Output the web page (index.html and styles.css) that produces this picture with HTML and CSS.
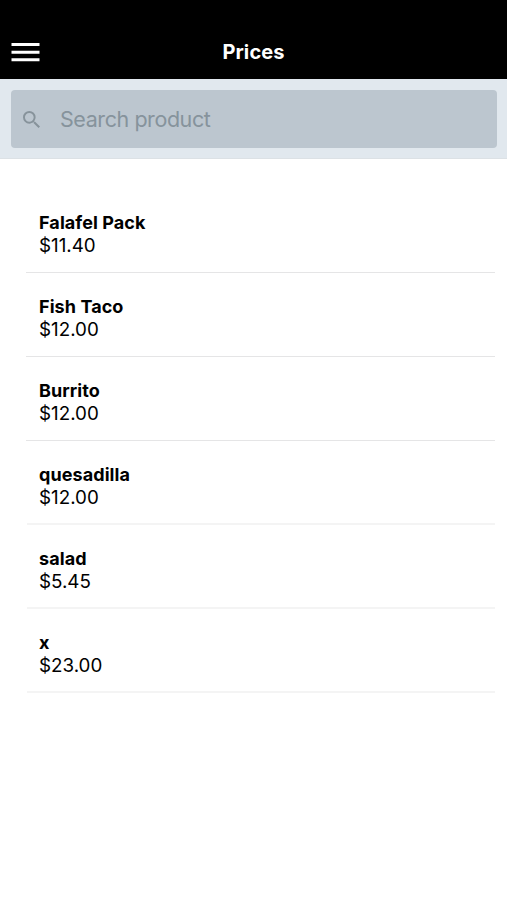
FILE: index.html
```html
<!DOCTYPE html>
<html lang="en">
<head>
<meta charset="utf-8">
<title>Prices</title>
<link rel="stylesheet" href="styles.css">
</head>
<body>
<header class="header">
  <button class="menu" aria-label="Menu"><svg viewBox="0 0 29 20" width="29" height="20"><path d="M.5 2.6h28M.5 10.2h28M.5 17.8h28" stroke="#fff" stroke-width="3"/></svg></button>
  <h1 class="title">Prices</h1>
</header>
<div class="search-bar">
  <label class="search">
    <svg class="search-icon" viewBox="3 3 17.5 17.5" width="17" height="17"><path fill="#87939b" d="M15.5 14h-.79l-.28-.27A6.47 6.47 0 0 0 16 9.5 6.5 6.5 0 1 0 9.5 16c1.61 0 3.09-.59 4.23-1.57l.27.28v.79l5 4.99L20.49 19l-4.99-5zm-6 0a4.5 4.5 0 1 1 0-9 4.5 4.5 0 0 1 0 9z"/></svg>
    <span class="placeholder">Search product</span>
  </label>
</div>
<ul class="list">
  <li class="item"><span class="name">Falafel Pack</span><span class="price">$11.40</span></li>
  <li class="item"><span class="name">Fish Taco</span><span class="price">$12.00</span></li>
  <li class="item"><span class="name">Burrito</span><span class="price">$12.00</span></li>
  <li class="item soft"><span class="name">quesadilla</span><span class="price">$12.00</span></li>
  <li class="item soft"><span class="name">salad</span><span class="price">$5.45</span></li>
  <li class="item soft"><span class="name">x</span><span class="price">$23.00</span></li>
</ul>
</body>
</html>
```
FILE: styles.css
```css
* { box-sizing: border-box; }
body { margin: 0; min-height: 900px; background: #fff; color: #000; font-family: Inter, "Liberation Sans", sans-serif; }
.header { height: 79px; padding: 25px 11px 0; background: #000; display: grid; grid-template-columns: 29px 1fr 29px; align-items: center; }
.menu { padding: 0; border: 0; background: none; height: 20px; display: flex; }
.title { margin: 0; text-align: center; color: #fff; font-size: 20px; line-height: 26px; font-weight: 650; letter-spacing: 0.1px; }
.search-bar { height: 80px; padding: 11px 10px 10px 11px; background: #e1e8ee; border-bottom: 1px solid #dce1e5; }
.search { height: 58px; display: flex; align-items: center; padding-left: 12px; background: #bcc6cf; border-radius: 4px; }
.placeholder { margin-left: 20px; color: #86939c; font-size: 21.5px; line-height: 28px; letter-spacing: -0.43px; }
.list { margin: 30px 12px 0 26px; padding: 0; list-style: none; }
.item { height: 84px; padding: 22px 13px 0; border-bottom: 1px solid #e5e5e6; display: flex; flex-direction: column; align-items: flex-start; }
.item.soft { margin-left: 1px; padding-left: 12px; border-bottom: 2px solid #f4f4f4; }
.name { font-size: 18px; line-height: 23px; font-weight: 650; letter-spacing: 0.08px; }
.price { font-size: 18.8px; line-height: 23px; }
```
